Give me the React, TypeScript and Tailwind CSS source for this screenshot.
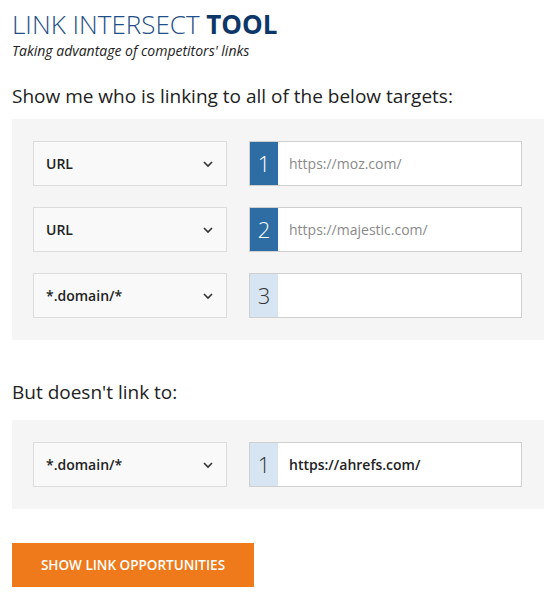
import React from "react";

const font = { fontFamily: '"Open Sans", "Liberation Sans", sans-serif' };

function Chevron() {
  return (
    <svg width="12" height="8" viewBox="0 0 12 8" className="text-[#333]">
      <path d="M2 2 L6 6 L10 2" fill="none" stroke="currentColor" strokeWidth="1.6" />
    </svg>
  );
}

function Row({
  sel,
  num,
  active,
  value,
  placeholder,
}: {
  sel: string;
  num: number;
  active: boolean;
  value?: string;
  placeholder?: string;
}) {
  return (
    <div className="flex items-center gap-[22px]">
      <div className="flex h-[45px] w-[194px] items-center justify-between border border-[#dcdcdc] bg-[#f9f9f9] pl-[12px] pr-[12px]">
        <span className="text-[14px] font-semibold text-[#222]">{sel}</span>
        <Chevron />
      </div>
      <div className="flex h-[45px] w-[273px] border border-[#cfcfcf] bg-white">
        <div
          className={
            active
              ? "flex w-[28px] items-center justify-center bg-[#2e6da4] text-[22px] font-light text-white"
              : "flex w-[28px] items-center justify-center bg-[#d6e5f1] text-[22px] font-light text-[#333]"
          }
        >
          {num}
        </div>
        <div className="flex flex-1 items-center pl-[11px] text-[14px]">
          {value ? (
            <span className="font-semibold text-[#222]">{value}</span>
          ) : (
            <span className="text-[#8a8a8a]">{placeholder}</span>
          )}
        </div>
      </div>
    </div>
  );
}

export default function App() {
  return (
    <div className="w-[560px] h-[606px] bg-white px-[12px] pt-[7px]" style={font}>
      <h1 className="text-[26px] leading-[34px] text-[#1f4f86] font-light">
        LINK INTERSECT <span className="font-bold text-[#0c3768]">TOOL</span>
      </h1>
      <p className="text-[14px] italic leading-[18px] text-[#222] mt-[1px]">
        Taking advantage of competitors' links
      </p>
      <p className="mt-[24px] text-[19px] leading-[24px] text-[#222]">
        Show me who is linking to all of the below targets:
      </p>
      <div className="mt-[11px] flex w-[532px] flex-col gap-[21px] bg-[#f5f5f5] py-[22px] pl-[21px]">
        <Row sel="URL" num={1} active placeholder="https://moz.com/" />
        <Row sel="URL" num={2} active placeholder="https://majestic.com/" />
        <Row sel="*.domain/*" num={3} active={false} />
      </div>
      <p className="mt-[40px] text-[19px] leading-[24px] text-[#222]">But doesn't link to:</p>
      <div className="mt-[16px] flex w-[532px] flex-col bg-[#f5f5f5] py-[22px] pl-[21px]">
        <Row sel="*.domain/*" num={1} active={false} value="https://ahrefs.com/" />
      </div>
      <button className="mt-[34px] flex h-[44px] w-[242px] items-center justify-center bg-[#ee7a1b] text-[13.5px] font-semibold text-white">
        SHOW LINK OPPORTUNITIES
      </button>
    </div>
  );
}
